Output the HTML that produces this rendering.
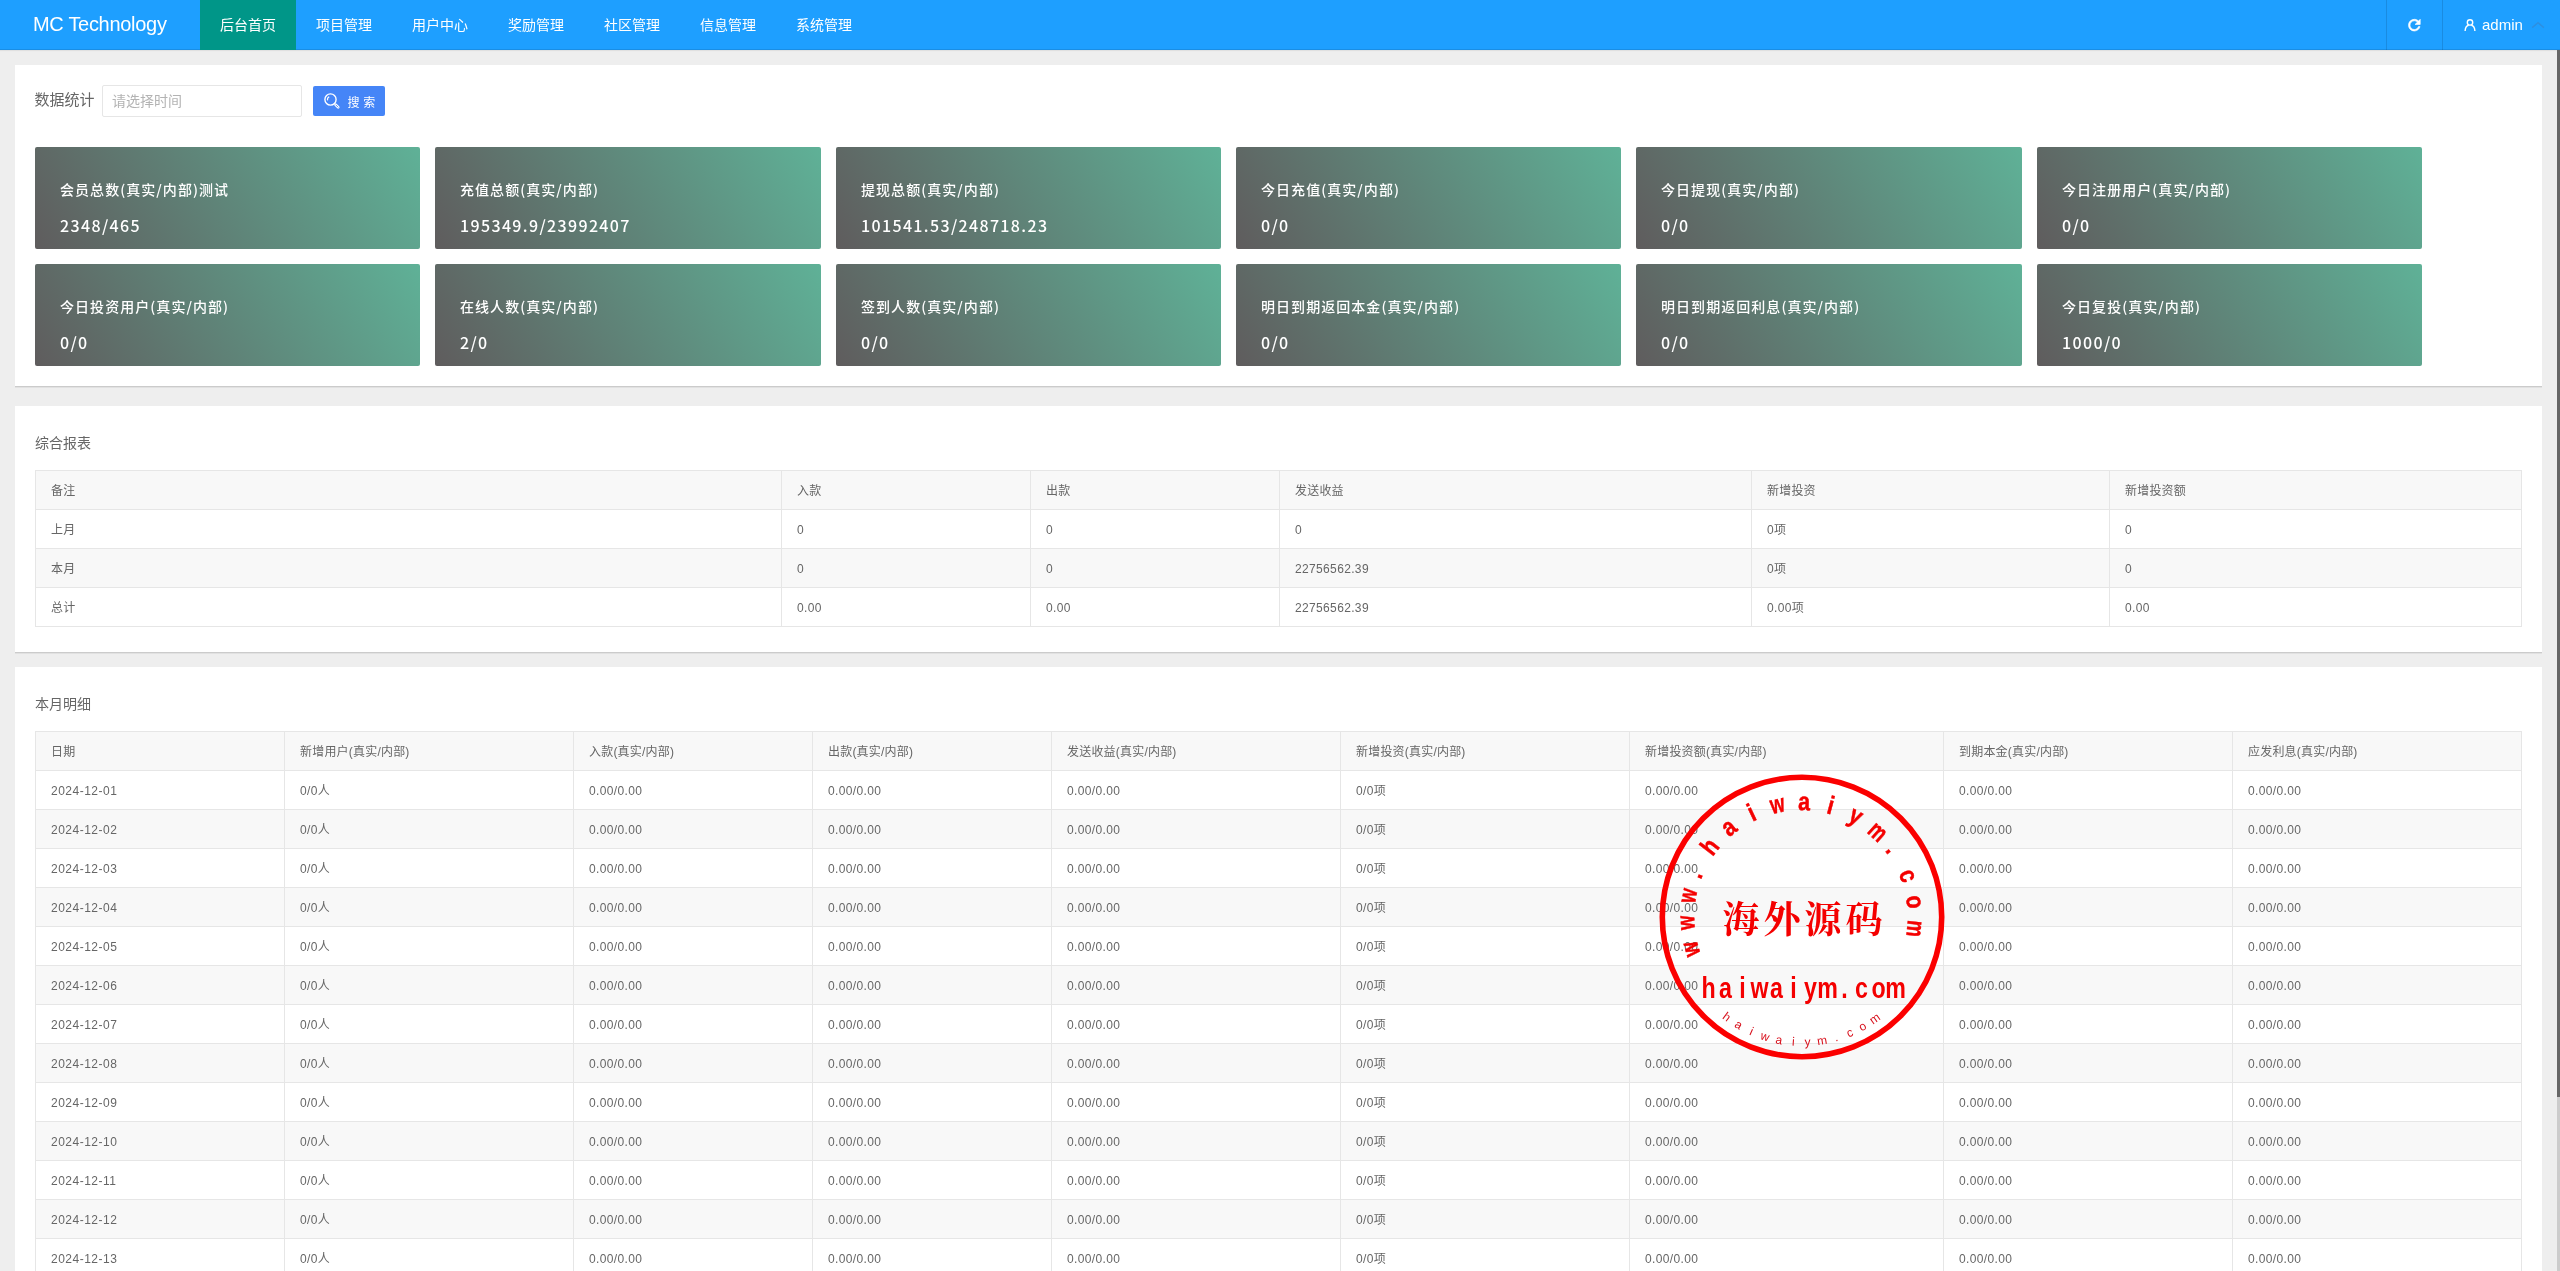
<!DOCTYPE html><html lang="zh-CN"><head><meta charset="utf-8"><title>MC Technology</title><style>
*{box-sizing:border-box;margin:0;padding:0}
html,body{width:2560px;height:1271px;overflow:hidden;background:#eee}
body{position:relative;font-family:"Liberation Sans","Noto Sans CJK SC",sans-serif;font-size:14px;color:#666;line-height:24px}
.wrap{position:absolute;left:0;top:0;width:2560px;height:1271px;overflow:hidden;will-change:transform}
.hd{position:absolute;left:0;top:0;width:2560px;height:50px;background:#1E9FFF;box-shadow:inset 0 -1px 0 rgba(0,0,0,.1),0 1px 1px rgba(0,0,0,.06);z-index:5}
.logo{position:absolute;left:0;top:0;width:200px;height:50px;line-height:48px;color:#fff;font-size:20px;padding-left:33px;letter-spacing:-.3px;white-space:nowrap}
.nav{position:absolute;left:200px;top:0;height:50px;list-style:none;display:flex}
.nav li{width:96px;height:50px;line-height:50px;text-align:center;color:#fff;font-size:14px}
.nav li.on{background:#009688}
.hr{position:absolute;top:0;height:50px;border-left:1px solid rgba(0,0,0,.12)}
.sb-thumb{position:absolute;left:2557px;top:50px;width:3px;height:1047px;background:#666;z-index:6}
.sb-track{position:absolute;left:2557px;top:1097px;width:3px;height:174px;background:#ccc;z-index:6}
.card{position:absolute;left:15px;width:2527px;background:#fff;box-shadow:0 1px 0 rgba(0,0,0,.1),0 2px 0 rgba(0,0,0,.05)}
.lbl{position:absolute;left:35px;font-size:14px;color:#666;white-space:nowrap}
.inp{position:absolute;left:102px;top:85px;width:200px;height:32px;border:1px solid #e6e6e6;border-radius:2px;background:#fff;padding-left:9px;line-height:30px;font-size:14px;color:#b3b3b3}
.btn{position:absolute;left:313px;top:86px;width:72px;height:30px;background:#4585f7;border-radius:2px;color:#fff;font-size:12px;line-height:30px}
.st{position:absolute;height:102px;border-radius:2px;background:linear-gradient(58deg,#5f5c5d 0%,#5fb197 100%);color:#fff;font-family:"Noto Sans CJK SC",sans-serif}
.st b{position:absolute;left:25px;top:30px;font-weight:500;font-size:14px;letter-spacing:1.05px;line-height:24px;white-space:nowrap}
.st i{position:absolute;left:25px;top:66px;font-style:normal;font-weight:500;font-size:16px;letter-spacing:1.35px;line-height:24px;white-space:nowrap}
table{position:absolute;left:35px;border-collapse:collapse;table-layout:fixed;width:2486px;font-size:12px;color:#666}
td,th{height:39px;border:1px solid #e6e6e6;padding:0 15px;text-align:left;font-weight:400;line-height:20px;white-space:nowrap;overflow:hidden}
thead tr,tbody tr:nth-child(even){background:#f8f8f8}
.t2 thead tr,.t2 tbody tr:nth-child(even){background:#f8f8f8}
td{letter-spacing:.35px;padding-top:2px}th{letter-spacing:.2px;padding-top:2px}td.d{letter-spacing:.5px}
</style></head><body><div class="wrap">
<div class="hd"><div class="logo">MC Technology</div><ul class="nav">
<li class="on">后台首页</li>
<li>项目管理</li>
<li>用户中心</li>
<li>奖励管理</li>
<li>社区管理</li>
<li>信息管理</li>
<li>系统管理</li>
</ul>
<div class="hr" style="left:2386px"></div><div class="hr" style="left:2442px"></div>
<svg style="position:absolute;left:2404px;top:15px" width="20" height="20" viewBox="0 0 20 20"><g transform="translate(1.6,1.4) scale(0.73)"><path fill="#fff" d="M17.65 6.35C16.2 4.9 14.21 4 12 4c-4.42 0-7.99 3.58-7.99 8s3.57 8 7.99 8c3.73 0 6.84-2.55 7.73-6h-2.08c-.82 2.33-3.04 4-5.65 4-3.31 0-6-2.69-6-6s2.69-6 6-6c1.66 0 3.14.69 4.22 1.78L13 11h7V4l-2.35 2.35z" stroke="#fff" stroke-width="0.9"/></g></svg>
<svg style="position:absolute;left:2460px;top:15px" width="20" height="20" viewBox="0 0 20 20"><circle cx="10" cy="7.4" r="2.7" fill="none" stroke="#fff" stroke-width="1.4"/><path d="M5.1 16 C5.3 12.6 7 10.7 8.6 10.3 M14.9 16 C14.7 12.6 13 10.7 11.4 10.3" fill="none" stroke="#fff" stroke-width="1.4"/></svg>
<div style="position:absolute;left:2482px;top:0;line-height:49px;color:#fff;font-size:15px">admin</div>
<svg style="position:absolute;left:2531px;top:21px" width="14" height="8" viewBox="0 0 14 8"><path d="M1.2 6.6 L7 1.6 L12.8 6.6" fill="none" stroke="#2d8fe0" stroke-width="1.4"/></svg>
</div>
<div class="sb-thumb"></div><div class="sb-track"></div>
<div class="card" style="top:65px;height:321px"></div>
<div class="lbl" style="top:88px;font-size:15px;left:34.5px">数据统计</div>
<div class="inp">请选择时间</div>
<div class="btn"><svg style="position:absolute;left:9px;top:5px" width="20" height="20" viewBox="0 0 20 20"><circle cx="8.5" cy="8.5" r="5.6" fill="none" stroke="#fff" stroke-width="1.4"/><path d="M5.6 9.4 A3.1 3.1 0 0 1 7.2 5.8" fill="none" stroke="#fff" stroke-width="1.1"/><path d="M13.6 13.7 L16.2 16.3" stroke="#fff" stroke-width="2.7" stroke-linecap="round"/><path d="M13.9 14 L16 16.1" stroke="#4585f7" stroke-width="0.9" stroke-linecap="round"/></svg><span style="position:absolute;left:34.5px;top:1.5px;word-spacing:.5px">搜 索</span></div>
<div class="st" style="left:35px;width:385px;top:147px"><b>会员总数(真实/内部)测试</b><i>2348/465</i></div>
<div class="st" style="left:435px;width:386px;top:147px"><b>充值总额(真实/内部)</b><i>195349.9/23992407</i></div>
<div class="st" style="left:836px;width:385px;top:147px"><b>提现总额(真实/内部)</b><i>101541.53/248718.23</i></div>
<div class="st" style="left:1236px;width:385px;top:147px"><b>今日充值(真实/内部)</b><i>0/0</i></div>
<div class="st" style="left:1636px;width:386px;top:147px"><b>今日提现(真实/内部)</b><i>0/0</i></div>
<div class="st" style="left:2037px;width:385px;top:147px"><b>今日注册用户(真实/内部)</b><i>0/0</i></div>
<div class="st" style="left:35px;width:385px;top:264px"><b>今日投资用户(真实/内部)</b><i>0/0</i></div>
<div class="st" style="left:435px;width:386px;top:264px"><b>在线人数(真实/内部)</b><i>2/0</i></div>
<div class="st" style="left:836px;width:385px;top:264px"><b>签到人数(真实/内部)</b><i>0/0</i></div>
<div class="st" style="left:1236px;width:385px;top:264px"><b>明日到期返回本金(真实/内部)</b><i>0/0</i></div>
<div class="st" style="left:1636px;width:386px;top:264px"><b>明日到期返回利息(真实/内部)</b><i>0/0</i></div>
<div class="st" style="left:2037px;width:385px;top:264px"><b>今日复投(真实/内部)</b><i>1000/0</i></div>
<div class="card" style="top:406px;height:246px"></div>
<div class="lbl" style="top:431px">综合报表</div>
<table style="top:470px"><colgroup><col style="width:746px"><col style="width:249px"><col style="width:249px"><col style="width:472px"><col style="width:358px"><col style="width:412px"></colgroup><thead><tr><th>备注</th><th>入款</th><th>出款</th><th>发送收益</th><th>新增投资</th><th>新增投资额</th></tr></thead><tbody>
<tr><td>上月</td><td>0</td><td>0</td><td>0</td><td>0项</td><td>0</td></tr>
<tr><td>本月</td><td>0</td><td>0</td><td>22756562.39</td><td>0项</td><td>0</td></tr>
<tr><td>总计</td><td>0.00</td><td>0.00</td><td>22756562.39</td><td>0.00项</td><td>0.00</td></tr>
</tbody></table>
<div class="card" style="top:667px;height:700px"></div>
<div class="lbl" style="top:692px">本月明细</div>
<table class="t2" style="top:731px"><colgroup><col style="width:249px"><col style="width:289px"><col style="width:239px"><col style="width:239px"><col style="width:289px"><col style="width:289px"><col style="width:314px"><col style="width:289px"><col style="width:289px"></colgroup><thead><tr><th>日期</th><th>新增用户(真实/内部)</th><th>入款(真实/内部)</th><th>出款(真实/内部)</th><th>发送收益(真实/内部)</th><th>新增投资(真实/内部)</th><th>新增投资额(真实/内部)</th><th>到期本金(真实/内部)</th><th>应发利息(真实/内部)</th></tr></thead><tbody>
<tr><td class="d">2024-12-01</td><td>0/0人</td><td>0.00/0.00</td><td>0.00/0.00</td><td>0.00/0.00</td><td>0/0项</td><td>0.00/0.00</td><td>0.00/0.00</td><td>0.00/0.00</td></tr>
<tr><td class="d">2024-12-02</td><td>0/0人</td><td>0.00/0.00</td><td>0.00/0.00</td><td>0.00/0.00</td><td>0/0项</td><td>0.00/0.00</td><td>0.00/0.00</td><td>0.00/0.00</td></tr>
<tr><td class="d">2024-12-03</td><td>0/0人</td><td>0.00/0.00</td><td>0.00/0.00</td><td>0.00/0.00</td><td>0/0项</td><td>0.00/0.00</td><td>0.00/0.00</td><td>0.00/0.00</td></tr>
<tr><td class="d">2024-12-04</td><td>0/0人</td><td>0.00/0.00</td><td>0.00/0.00</td><td>0.00/0.00</td><td>0/0项</td><td>0.00/0.00</td><td>0.00/0.00</td><td>0.00/0.00</td></tr>
<tr><td class="d">2024-12-05</td><td>0/0人</td><td>0.00/0.00</td><td>0.00/0.00</td><td>0.00/0.00</td><td>0/0项</td><td>0.00/0.00</td><td>0.00/0.00</td><td>0.00/0.00</td></tr>
<tr><td class="d">2024-12-06</td><td>0/0人</td><td>0.00/0.00</td><td>0.00/0.00</td><td>0.00/0.00</td><td>0/0项</td><td>0.00/0.00</td><td>0.00/0.00</td><td>0.00/0.00</td></tr>
<tr><td class="d">2024-12-07</td><td>0/0人</td><td>0.00/0.00</td><td>0.00/0.00</td><td>0.00/0.00</td><td>0/0项</td><td>0.00/0.00</td><td>0.00/0.00</td><td>0.00/0.00</td></tr>
<tr><td class="d">2024-12-08</td><td>0/0人</td><td>0.00/0.00</td><td>0.00/0.00</td><td>0.00/0.00</td><td>0/0项</td><td>0.00/0.00</td><td>0.00/0.00</td><td>0.00/0.00</td></tr>
<tr><td class="d">2024-12-09</td><td>0/0人</td><td>0.00/0.00</td><td>0.00/0.00</td><td>0.00/0.00</td><td>0/0项</td><td>0.00/0.00</td><td>0.00/0.00</td><td>0.00/0.00</td></tr>
<tr><td class="d">2024-12-10</td><td>0/0人</td><td>0.00/0.00</td><td>0.00/0.00</td><td>0.00/0.00</td><td>0/0项</td><td>0.00/0.00</td><td>0.00/0.00</td><td>0.00/0.00</td></tr>
<tr><td class="d">2024-12-11</td><td>0/0人</td><td>0.00/0.00</td><td>0.00/0.00</td><td>0.00/0.00</td><td>0/0项</td><td>0.00/0.00</td><td>0.00/0.00</td><td>0.00/0.00</td></tr>
<tr><td class="d">2024-12-12</td><td>0/0人</td><td>0.00/0.00</td><td>0.00/0.00</td><td>0.00/0.00</td><td>0/0项</td><td>0.00/0.00</td><td>0.00/0.00</td><td>0.00/0.00</td></tr>
<tr><td class="d">2024-12-13</td><td>0/0人</td><td>0.00/0.00</td><td>0.00/0.00</td><td>0.00/0.00</td><td>0/0项</td><td>0.00/0.00</td><td>0.00/0.00</td><td>0.00/0.00</td></tr>
<tr><td class="d">2024-12-14</td><td>0/0人</td><td>0.00/0.00</td><td>0.00/0.00</td><td>0.00/0.00</td><td>0/0项</td><td>0.00/0.00</td><td>0.00/0.00</td><td>0.00/0.00</td></tr>
<tr><td class="d">2024-12-15</td><td>0/0人</td><td>0.00/0.00</td><td>0.00/0.00</td><td>0.00/0.00</td><td>0/0项</td><td>0.00/0.00</td><td>0.00/0.00</td><td>0.00/0.00</td></tr>
</tbody></table>
<svg style="position:absolute;left:1651.5px;top:767.3px;z-index:4;overflow:visible" width="300" height="300" viewBox="-150 -150 300 300"><circle cx="0" cy="0" r="139.7" fill="none" stroke="#fb0000" stroke-width="5.6"/><g font-family="Liberation Sans,sans-serif" font-weight="700" font-size="25.5" fill="#f40000" text-anchor="middle" transform="translate(-1,0)"><text transform="rotate(-106.30) translate(0,-106.8) scale(0.72,1)" x="0" y="0" stroke="#f40000" stroke-width="0.5">w</text><text transform="rotate(-92.82) translate(0,-106.8) scale(0.72,1)" x="0" y="0" stroke="#f40000" stroke-width="0.5">w</text><text transform="rotate(-79.34) translate(0,-106.8) scale(0.72,1)" x="0" y="0" stroke="#f40000" stroke-width="0.5">w</text><text transform="rotate(-68.16) translate(0,-106.8) scale(0.84,1)" x="0" y="0" stroke="#f40000" stroke-width="0.5">.</text><text transform="rotate(-52.38) translate(0,-106.8) scale(0.84,1)" x="0" y="0" stroke="#f40000" stroke-width="0.5">h</text><text transform="rotate(-38.90) translate(0,-106.8) scale(0.84,1)" x="0" y="0" stroke="#f40000" stroke-width="0.5">a</text><text transform="rotate(-25.42) translate(0,-106.8) scale(0.84,1)" x="0" y="0" stroke="#f40000" stroke-width="0.5">i</text><text transform="rotate(-11.94) translate(0,-106.8) scale(0.72,1)" x="0" y="0" stroke="#f40000" stroke-width="0.5">w</text><text transform="rotate(1.54) translate(0,-106.8) scale(0.84,1)" x="0" y="0" stroke="#f40000" stroke-width="0.5">a</text><text transform="rotate(15.02) translate(0,-106.8) scale(0.84,1)" x="0" y="0" stroke="#f40000" stroke-width="0.5">i</text><text transform="rotate(28.50) translate(0,-106.8) scale(0.84,1)" x="0" y="0" stroke="#f40000" stroke-width="0.5">y</text><text transform="rotate(41.98) translate(0,-106.8) scale(0.72,1)" x="0" y="0" stroke="#f40000" stroke-width="0.5">m</text><text transform="rotate(53.16) translate(0,-106.8) scale(0.84,1)" x="0" y="0" stroke="#f40000" stroke-width="0.5">.</text><text transform="rotate(68.94) translate(0,-106.8) scale(0.84,1)" x="0" y="0" stroke="#f40000" stroke-width="0.5">c</text><text transform="rotate(82.42) translate(0,-106.8) scale(0.84,1)" x="0" y="0" stroke="#f40000" stroke-width="0.5">o</text><text transform="rotate(95.90) translate(0,-106.8) scale(0.72,1)" x="0" y="0" stroke="#f40000" stroke-width="0.5">m</text></g><g font-family="Noto Serif CJK SC,serif" font-weight="700" font-size="37" fill="#f40000" text-anchor="middle"><text x="-61.0" y="15.5">海</text><text x="-20.0" y="15.5">外</text><text x="21.0" y="15.5">源</text><text x="62.0" y="15.5">码</text></g><g font-family="Liberation Sans,sans-serif" font-weight="700" font-size="29" fill="#f40000" text-anchor="middle" transform="translate(0,80.5) scale(0.8,1)"><text x="-116.9" y="0">h</text><text x="-95.6" y="0">a</text><text x="-74.4" y="0">i</text><text x="-53.1" y="0">w</text><text x="-31.9" y="0">a</text><text x="-10.6" y="0">i</text><text x="10.6" y="0">y</text><text x="31.9" y="0">m</text><text x="53.1" y="0">.</text><text x="74.4" y="0">c</text><text x="95.6" y="0">o</text><text x="116.9" y="0">m</text></g><g font-family="Liberation Sans,sans-serif" font-size="12" fill="#d8101c" text-anchor="middle"><text transform="rotate(37.0)" x="0" y="129">h</text><text transform="rotate(30.4)" x="0" y="129">a</text><text transform="rotate(23.8)" x="0" y="129">i</text><text transform="rotate(17.2)" x="0" y="129">w</text><text transform="rotate(10.6)" x="0" y="129">a</text><text transform="rotate(4.0)" x="0" y="129">i</text><text transform="rotate(-2.6)" x="0" y="129">y</text><text transform="rotate(-9.2)" x="0" y="129">m</text><text transform="rotate(-15.8)" x="0" y="129">.</text><text transform="rotate(-22.4)" x="0" y="129">c</text><text transform="rotate(-29.0)" x="0" y="129">o</text><text transform="rotate(-35.6)" x="0" y="129">m</text></g></svg>
</div></body></html>
